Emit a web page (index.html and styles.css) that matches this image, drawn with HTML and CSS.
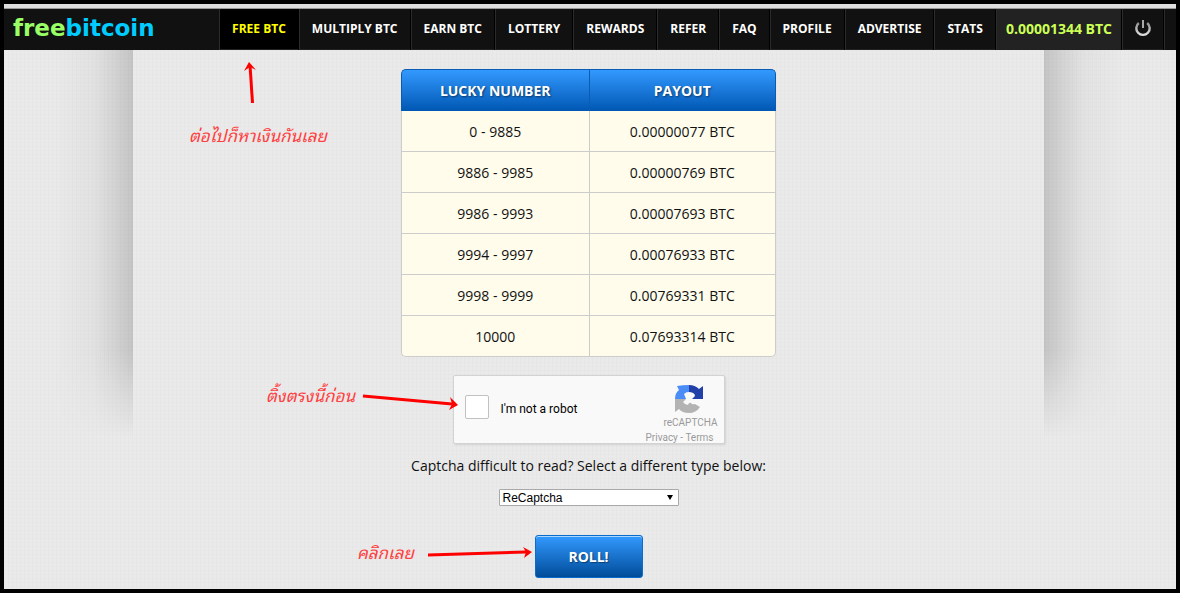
FILE: index.html
```html
<!DOCTYPE html>
<html lang="en">
<head>
    <meta charset="UTF-8">
    <meta name="viewport" content="width=device-width, initial-scale=1.0">
    <title>freebitcoin</title>
    <link rel="stylesheet" href="styles.css">
</head>
<body>
    <header class="top-bar">
        <a class="logo" href="#"><span class="logo-free">free</span><span class="logo-coin">bitcoin</span></a>
        <nav>
            <ul class="menu">
                <li><a class="active" href="#">FREE BTC</a></li>
                <li><a href="#">MULTIPLY BTC</a></li>
                <li><a href="#">EARN BTC</a></li>
                <li><a href="#">LOTTERY</a></li>
                <li><a href="#">REWARDS</a></li>
                <li><a href="#">REFER</a></li>
                <li><a href="#">FAQ</a></li>
                <li><a href="#">PROFILE</a></li>
                <li><a href="#">ADVERTISE</a></li>
                <li><a href="#">STATS</a></li>
                <li><a class="balance" href="#">0.00001344 BTC</a></li>
                <li>
                    <a class="logout" href="#" aria-label="Logout">
                        <svg width="18" height="18" viewBox="0 0 18 18" fill="none" stroke-width="2.400">
                            <defs>
                                <linearGradient id="metal" gradientUnits="userSpaceOnUse" x1="0" y1="0" x2="0" y2="18">
                                    <stop offset="0" stop-color="#777"/>
                                    <stop offset="1" stop-color="#eee"/>
                                </linearGradient>
                            </defs>
                            <path stroke="url(#metal)" d="M4.800 4A6.700 6.700 0 1 0 13.200 4"/>
                            <path stroke="#aaa" stroke-width="2" d="M9 1V9"/>
                        </svg>
                    </a>
                </li>
            </ul>
        </nav>
    </header>

    <div class="page">
        <div class="shade shade-left"></div>
        <main class="content">
            <table class="payouts">
                <thead>
                    <tr><th>LUCKY NUMBER</th><th>PAYOUT</th></tr>
                </thead>
                <tbody>
                    <tr><td>0 - 9885</td><td>0.00000077 BTC</td></tr>
                    <tr><td>9886 - 9985</td><td>0.00000769 BTC</td></tr>
                    <tr><td>9986 - 9993</td><td>0.00007693 BTC</td></tr>
                    <tr><td>9994 - 9997</td><td>0.00076933 BTC</td></tr>
                    <tr><td>9998 - 9999</td><td>0.00769331 BTC</td></tr>
                    <tr><td>10000</td><td>0.07693314 BTC</td></tr>
                </tbody>
            </table>

            <div class="captcha">
                <input type="checkbox" id="robot">
                <label for="robot">I'm not a robot</label>
                <div class="captcha-brand">
                    <svg width="28" height="28" viewBox="0 0 28 28">
                        <path fill="#4a8df6" d="M14 0V7Q11 7 11 10L15 14H0Q0 8 4 5L2 1Q8 0 14 0Z"/>
                        <path fill="#2340a8" d="M14 0Q20 0 24 4L28 1V14H16L20 10Q18 7 14 7Z"/>
                        <path fill="#b3b3b3" d="M0 14H11L8 17Q10 20 13 20Q14 17 16 18Q17 20 20 19L25 22Q21 28 14 28Q7 28 4 24L0 27Z"/>
                        <path fill="#f9f9f9" d="M9 9L12 7L14 10L18 8L20 11L17 14L19 17L14 16L11 19L11 14Z"/>
                    </svg>
                    <span class="captcha-name">reCAPTCHA</span>
                    <span class="captcha-links"><a href="#">Privacy</a> - <a href="#">Terms</a></span>
                </div>
            </div>

            <label class="captcha-hint" for="captchaType">Captcha difficult to read? Select a different type below:</label>
            <div class="select-box">
                <select id="captchaType">
                    <option>ReCaptcha</option>
                </select>
            </div>

            <button class="roll" type="button">ROLL!</button>

            <!-- notes drawn over the page -->
            <div class="note note-menu" lang="th">ต่อไปก็หาเงินกันเลย</div>
            <svg class="arrow arrow-menu" width="14" height="44" viewBox="0 0 14 44">
                <path d="M8.500 42L6 4" stroke="red" stroke-width="3"/>
                <path d="M0 10L5 1L12 9L6 6Z" fill="red"/>
            </svg>
            <div class="note note-check" lang="th">ติ้งตรงนี้ก่อน</div>
            <svg class="arrow arrow-check" width="97" height="18" viewBox="0 0 97 18">
                <path d="M1 4L90 12" stroke="red" stroke-width="3"/>
                <path d="M88 5L96 13L87 18L90 12Z" fill="red"/>
            </svg>
            <div class="note note-roll" lang="th">คลิกเลย</div>
            <svg class="arrow arrow-roll" width="104" height="14" viewBox="0 0 104 14">
                <path d="M0 9L98 6" stroke="red" stroke-width="3"/>
                <path d="M95 1L104 6L96 12L98 6Z" fill="red"/>
            </svg>
        </main>
        <div class="shade shade-right"></div>
    </div>
</body>
</html>
```
FILE: styles.css
```css
* {
    box-sizing: border-box;
}

body {
    margin: 0;
    min-height: 100vh;
    border: 4px solid #000;
    display: flex;
    flex-direction: column;
    background-color: #eaeaea;
    font-family: "Open Sans", sans-serif;
    font-size: 14px;
    color: #111;
}

a {
    color: inherit;
    text-decoration: none;
}

/* menu */
.top-bar {
    display: flex;
    justify-content: space-between;
    height: 46px;
    border-top: 4px solid #ddd;
    background-color: #111;
    box-shadow: inset 0 1px #999;
    padding: 1px 11px 0 9px;
}

.logo {
    font-family: "DejaVu Sans", sans-serif;
    font-size: 23px;
    font-weight: bold;
    line-height: 38px;
}

.logo-free {
    color: #9f6;
}

.logo-coin {
    color: #0cf;
}

.menu {
    display: flex;
    height: 100%;
    margin: 0;
    padding: 0;
    list-style: none;
    border-right: 1px solid #2b2b2b;
}

.menu li {
    border-left: 1px solid #2b2b2b;
    border-right: 1px solid #000;
}

.menu a {
    display: flex;
    align-items: center;
    height: 100%;
    padding: 0 12px 2px;
    border-bottom: 1px solid #222;
    color: #fff;
    font-size: 12px;
    font-weight: bold;
}

.menu .active {
    background-color: #000;
    color: #ff0;
}

.menu .balance {
    padding: 0 9px 1px;
    background-color: #222;
    color: #cf5;
    font-size: 14px;
}

.menu .logout {
    padding: 0 11px 2px;
}

/* page */
.page {
    flex: 1;
    display: grid;
    grid-template-columns: 1fr minmax(0, 911px) 1fr;
    padding-right: 3px;
    background-image:
        repeating-linear-gradient(90deg, rgba(0, 0, 0, 0.01) 0 1px, transparent 1px 4px),
        repeating-linear-gradient(rgba(0, 0, 0, 0.01) 0 1px, transparent 1px 4px);
}

.shade {
    height: 400px;
    -webkit-mask-image: linear-gradient(#000 75%, transparent 97%);
    mask-image: linear-gradient(#000 75%, transparent 97%);
}

.shade-left {
    background: linear-gradient(to left, rgba(0, 0, 0, 0.16), rgba(0, 0, 0, 0.09) 20px, rgba(0, 0, 0, 0.03) 40px, transparent 80px);
}

.shade-right {
    background: linear-gradient(to right, rgba(0, 0, 0, 0.16), rgba(0, 0, 0, 0.09) 20px, rgba(0, 0, 0, 0.03) 40px, transparent 80px);
}

.content {
    position: relative;
    display: flex;
    flex-direction: column;
    align-items: center;
    padding: 19px 0 11px;
}

.payouts {
    width: 375px;
    table-layout: fixed;
    border-collapse: separate;
    border-spacing: 0;
    text-align: center;
}

.payouts th {
    height: 42px;
    padding: 0;
    border-top: 1px solid #0a5cb0;
    border-left: 1px solid #0a5cb0;
    background: linear-gradient(#3399ff, #0057b3);
    color: #fff;
    text-shadow: 1px 1px 2px rgba(0, 0, 0, 0.5);
}

.payouts td {
    height: 41px;
    padding: 0;
    border-left: 1px solid #ccc;
    border-bottom: 1px solid #ccc;
    background-color: #fffcec;
}

.payouts th:last-child {
    border-right: 1px solid #0a5cb0;
    border-top-right-radius: 5px;
}

.payouts th:first-child {
    border-top-left-radius: 5px;
}

.payouts td:last-child {
    border-right: 1px solid #ccc;
}

.payouts tr:last-child td:first-child {
    border-bottom-left-radius: 5px;
}

.payouts tr:last-child td:last-child {
    border-bottom-right-radius: 5px;
}

/* captcha */
.captcha {
    display: flex;
    align-items: flex-start;
    width: 272px;
    height: 69px;
    margin-top: 18px;
    padding: 9px 6px 0 11px;
    border: 1px solid #d3d3d3;
    border-radius: 2px;
    background-color: #f9f9f9;
    box-shadow: 1px 1px 2px rgba(0, 0, 0, 0.1);
    font-family: Roboto, sans-serif;
    overflow: hidden;
}

.captcha input {
    appearance: none;
    width: 24px;
    height: 24px;
    margin: 10px 12px 0 0;
    border: 1px solid #c1c1c1;
    border-radius: 2px;
    background-color: #fff;
}

.captcha label {
    font-size: 12px;
    line-height: 24px;
    margin-top: 12px;
    color: #000;
}

.captcha-brand {
    display: flex;
    flex-direction: column;
    align-items: flex-end;
    margin-left: auto;
    color: #999;
    font-size: 10px;
    line-height: 15px;
}

.captcha-brand svg {
    margin-right: 15px;
}

.captcha-name {
    margin-top: 2px;
}

.captcha-links {
    margin-right: 4px;
}

.captcha-hint {
    margin-top: 12px;
    line-height: 20px;
}

.select-box {
    position: relative;
    width: 180px;
    height: 17px;
    margin-top: 13px;
}

.select-box select {
    appearance: none;
    display: block;
    width: 100%;
    height: 100%;
    padding: 0 3px;
    border: 1px solid #a9a9a9;
    border-radius: 1px;
    background-color: #fff;
    color: #000;
    font-family: "Liberation Sans", Arial, sans-serif;
    font-size: 12px;
}

.select-box::after {
    content: "";
    position: absolute;
    top: 6px;
    right: 6px;
    border: 3px solid transparent;
    border-top: 5px solid #000;
    border-bottom: 0;
    pointer-events: none;
}

.roll {
    width: 108px;
    height: 43px;
    margin-top: 29px;
    border: 1px solid #0a6ccb;
    border-radius: 3px;
    background: linear-gradient(#3399ff, #004c99);
    box-shadow: inset 0 1px rgba(255, 255, 255, 0.6);
    color: #fff;
    font-family: "Open Sans", sans-serif;
    font-size: 14px;
    font-weight: bold;
    text-shadow: 1px 1px 1px rgba(0, 0, 0, 0.4);
    cursor: pointer;
}

/* notes */
.note,
.arrow {
    position: absolute;
}

.note {
    color: #ff4040;
    font-family: "Noto Sans Thai Looped", "Noto Sans", sans-serif;
    font-size: 17px;
    font-style: italic;
    line-height: 24px;
    white-space: nowrap;
}

.note-menu {
    left: 56px;
    top: 73px;
}

.note-check {
    left: 133px;
    top: 333px;
}

.note-roll {
    left: 224px;
    top: 490px;
}

.arrow-menu {
    left: 111px;
    top: 11px;
}

.arrow-check {
    left: 229px;
    top: 342px;
}

.arrow-roll {
    left: 295px;
    top: 496px;
}
```
